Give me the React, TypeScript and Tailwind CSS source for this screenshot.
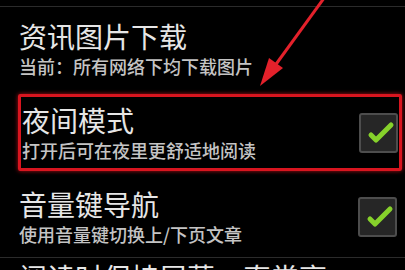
import React from "react";

type Item = {title: string; desc: string; checked?: boolean};

function Check() {
  return (
    <div className="w-[39px] h-[40px] shrink-0 rounded-[3px] border-2 border-[#4d4d4d] bg-[#262626] flex items-center justify-center">
      <svg width="35" height="36" viewBox="0 0 35 36">
        <polyline points="10,20 15,25 30,10" fill="none" stroke="#86d12b" strokeWidth="5" strokeLinecap="round" strokeLinejoin="round" />
      </svg>
    </div>
  );
}

function Row({item}: {item: Item}) {
  return (
    <div className="flex items-center justify-between">
      <div className="flex flex-col">
        <div className="text-[28px] leading-[30px] text-[#e6e6e6]">{item.title}</div>
        <div className="mt-[4px] text-[18px] leading-[22px] font-medium text-[#c4c4c4]">{item.desc}</div>
      </div>
      {item.checked && <Check />}
    </div>
  );
}

export default function App() {
  return (
    <div
      className="relative w-[405px] h-[270px] overflow-hidden bg-black"
      style={{fontFamily: '"Noto Sans CJK SC", "Noto Sans", sans-serif'}}
    >
      <div className="h-[6px]" />
      <div className="h-px bg-[#2b2b2b]" />
      <div className="pt-[14px] pl-[19px] pr-[8px]">
        <Row item={{title: "资讯图片下载", desc: "当前：所有网络下均下载图片"}} />
      </div>
      <div className="mt-[17px] ml-[18px] mr-[3px] border-[3px] border-[#d8151f] rounded-[2px] shadow-[0_0_4px_rgba(220,20,30,0.8)] pt-[8px] pb-[7px] pl-[1px] pr-[1px]">
        <Row item={{title: "夜间模式", desc: "打开后可在夜里更舒适地阅读", checked: true}} />
      </div>
      <div className="mt-[18px] pl-[19px] pr-[8px]">
        <Row item={{title: "音量键导航", desc: "使用音量键切换上/下页文章", checked: true}} />
      </div>
      <div className="mt-[12px] h-px bg-[#2b2b2b]" />
      <div className="pt-[4px] pl-[19px] text-[28px] leading-[30px] text-[#e6e6e6]">阅读时保持屏幕一直常亮</div>

      <svg className="absolute left-0 top-0 pointer-events-none" width="405" height="270" viewBox="0 0 405 270">
        <line x1="327" y1="-6" x2="274" y2="67" stroke="#e3212b" strokeWidth="3" />
        <polygon points="260,86 269,58 283,68" fill="#e3212b" />
      </svg>
    </div>
  );
}
